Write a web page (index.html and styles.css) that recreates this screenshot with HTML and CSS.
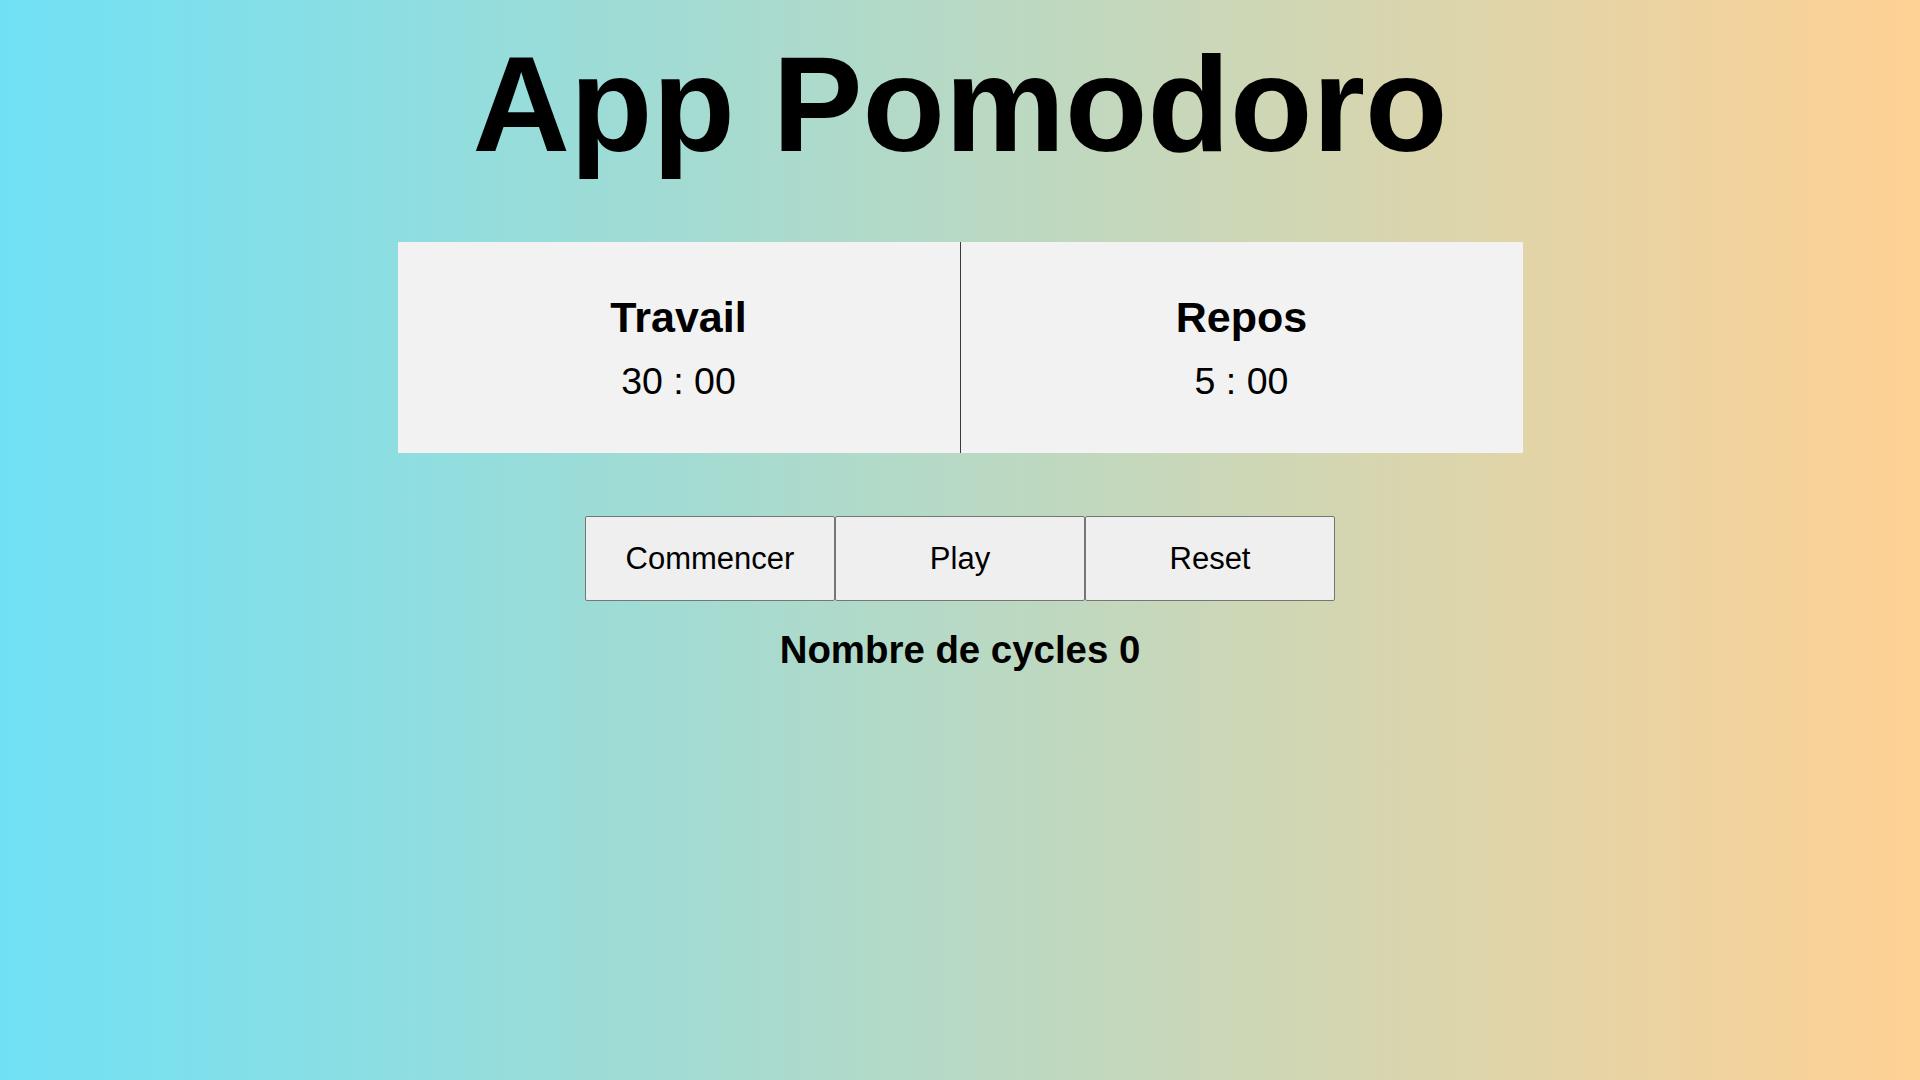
FILE: index.html
```html
<!DOCTYPE html>
<html lang="fr">
<head>
<meta charset="utf-8">
<title>App Pomodoro</title>
<link rel="stylesheet" href="styles.css">
</head>
<body>
<main class="app">
  <h1 class="title">App Pomodoro</h1>
  <section class="timers">
    <div class="timer timer--work">
      <h2 class="timer-label">Travail</h2>
      <p class="timer-value">30 : 00</p>
    </div>
    <div class="timer">
      <h2 class="timer-label">Repos</h2>
      <p class="timer-value">5 : 00</p>
    </div>
  </section>
  <div class="controls">
    <button class="btn" type="button">Commencer</button>
    <button class="btn" type="button">Play</button>
    <button class="btn" type="button">Reset</button>
  </div>
  <p class="cycles">Nombre de cycles 0</p>
</main>
</body>
</html>
```

FILE: styles.css
```css
html, body {
  margin: 0;
  padding: 0;
}

body {
  min-height: 100vh;
  background: linear-gradient(to right, #70e1f5, #ffd194);
  font-family: "Liberation Sans", Arial, sans-serif;
  color: #000;
}

.app {
  display: flex;
  flex-direction: column;
  align-items: center;
}

.title {
  margin: 27px 0 0;
  font-size: 135px;
  font-weight: 700;
  line-height: normal;
  text-align: center;
}

.timers {
  margin-top: 60px;
  width: 1125px;
  height: 211px;
  display: flex;
  background: #f2f2f2;
}

.timer {
  flex: 1;
  display: flex;
  flex-direction: column;
  justify-content: center;
  align-items: center;
  gap: 18px;
}

.timer--work {
  border-right: 1px solid #3a3a3a;
}

.timer-label {
  margin: 0;
  font-size: 43px;
  font-weight: 700;
  line-height: normal;
}

.timer-value {
  margin: 0;
  font-size: 37.5px;
  font-weight: 400;
  line-height: normal;
}

.controls {
  margin-top: 63px;
  display: flex;
}

.btn {
  box-sizing: border-box;
  width: 250px;
  height: 85px;
  margin: 0;
  padding: 0;
  background: #efefef;
  border: 1px solid #767676;
  border-radius: 2px;
  font-family: "Liberation Sans", Arial, sans-serif;
  font-size: 31px;
  color: #000;
}

.cycles {
  margin: 27px 0 0;
  font-size: 38.4px;
  font-weight: 700;
  line-height: normal;
}
```
